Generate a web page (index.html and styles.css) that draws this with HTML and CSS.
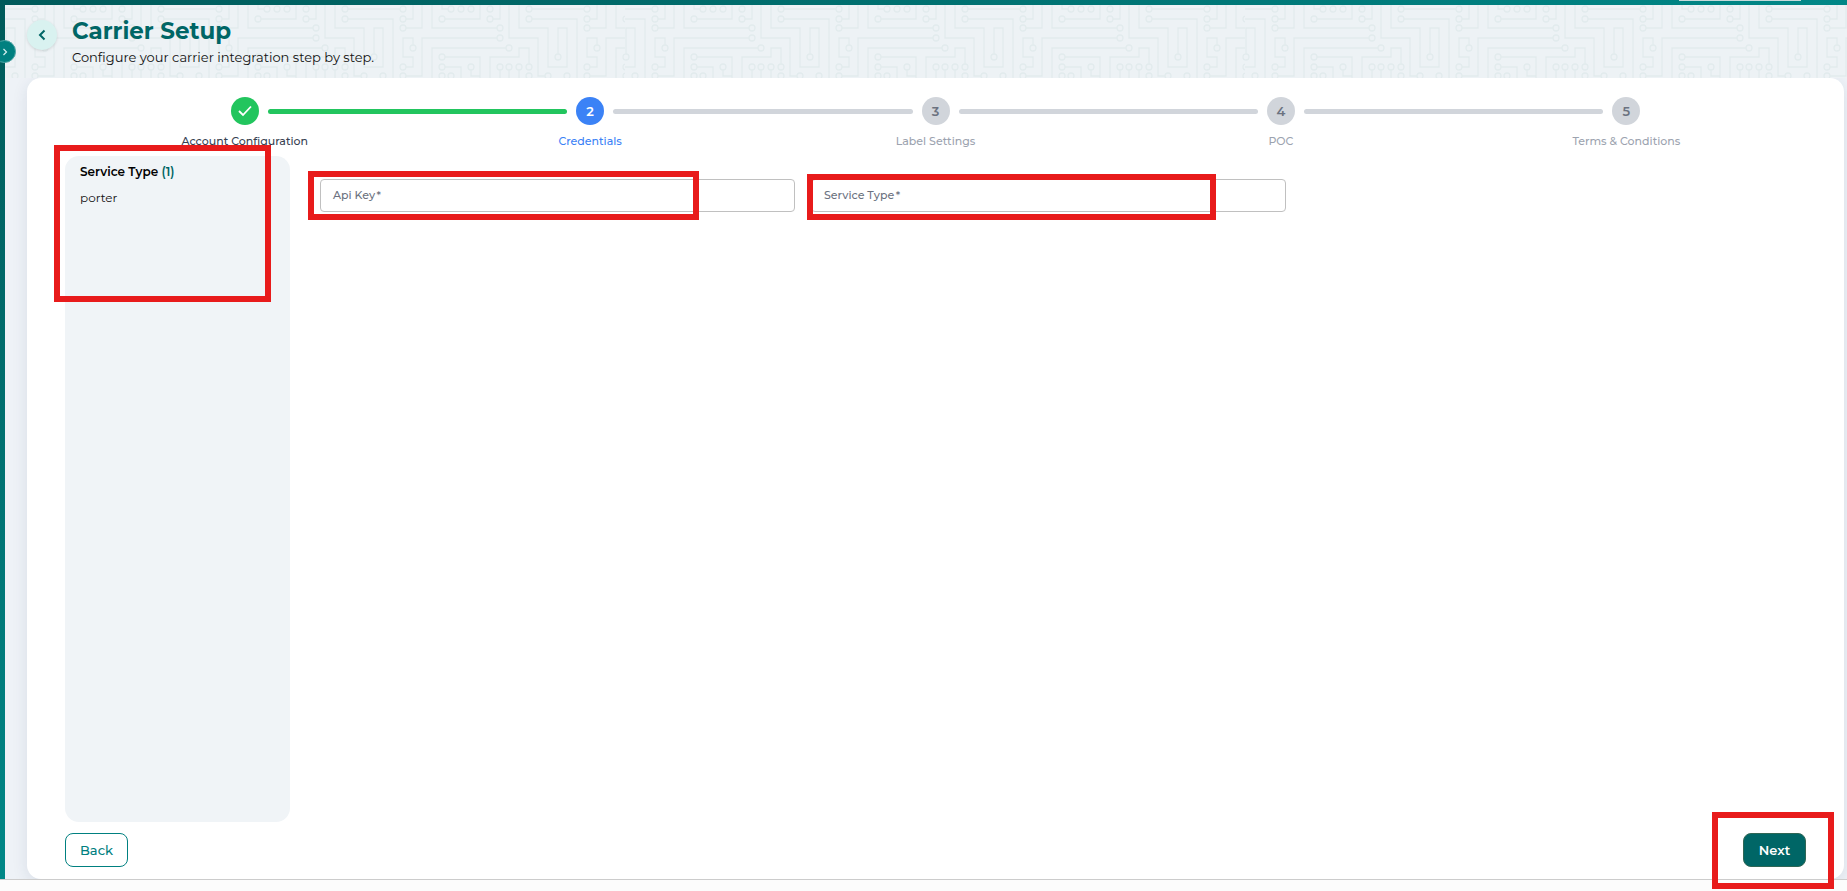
FILE: index.html
```html
<!DOCTYPE html>
<html lang="en">
<head>
	<meta charset="utf-8">
	<title>Carrier Setup</title>
	<meta name="viewport" content="width=device-width, initial-scale=1">
	<link rel="stylesheet" href="styles.css">
</head>
<body>
	<div class="shell">
		<div class="top-tab"></div>
		<button class="menu-toggle" aria-label="Open menu">
			<svg width="8" height="8" viewBox="0 0 8 8"><path d="M2.5 1 L5.5 4 L2.5 7"/></svg>
		</button>

		<div class="page">
			<header class="header">
				<!-- circuit board background -->
				<svg class="circuit" width="100%" height="100%" aria-hidden="true">
					<defs>
						<g id="traces">
							<path d="M129 4H181 M3 14H10V0 M3 23H19V0 M10 40V33H0V52H10V62H3 M3 71H19V33H94 M29 0V23H94 M29 80V43H103
								M42 14H77V0 M39 0V4H45 M90 14H97V0 M42 52H77V80 M42 62H58V80 M68 65V71H77
								M87 80V52H116V43H126V59 M97 65V80 M106 65V80 M116 65V80 M106 0V33H135V71H142
								M116 0V23H145V62H164V23H155V49 M129 14H174V80"/>
							<g>
								<circle cx="0" cy="4" r="3"/><circle cx="0" cy="14" r="3"/><circle cx="0" cy="23" r="3"/>
								<circle cx="10" cy="43" r="3"/><circle cx="0" cy="62" r="3"/><circle cx="0" cy="71" r="3"/>
								<circle cx="97" cy="23" r="3"/><circle cx="97" cy="33" r="3"/><circle cx="106" cy="43" r="3"/>
								<circle cx="39" cy="14" r="3"/><circle cx="48" cy="4" r="3"/><circle cx="58" cy="4" r="3"/>
								<circle cx="68" cy="4" r="3"/><circle cx="87" cy="4" r="3"/><circle cx="87" cy="14" r="3"/>
								<circle cx="39" cy="52" r="3"/><circle cx="39" cy="62" r="3"/><circle cx="68" cy="62" r="3"/>
								<circle cx="39" cy="71" r="3"/><circle cx="48" cy="71" r="3"/>
								<circle cx="97" cy="62" r="3"/><circle cx="106" cy="62" r="3"/><circle cx="116" cy="62" r="3"/>
								<circle cx="126" cy="62" r="3"/><circle cx="126" cy="71" r="3"/><circle cx="145" cy="71" r="3"/>
								<circle cx="155" cy="52" r="3"/><circle cx="164" cy="71" r="3"/>
								<circle cx="126" cy="4" r="3"/><circle cx="126" cy="14" r="3"/>
							</g>
						</g>
						<pattern id="board" width="620" height="80" patternUnits="userSpaceOnUse">
							<use href="#traces" x="-154"/>
							<use href="#traces" x="30"/>
							<use href="#traces" x="214"/>
							<use href="#traces" x="398"/>
							<use href="#traces" x="582"/>
						</pattern>
					</defs>
					<rect width="100%" height="100%" fill="url(#board)"/>
				</svg>
				<button class="back-arrow" aria-label="Go back">
					<svg width="12" height="12" viewBox="0 0 12 12"><path d="M8.5 1.5 L4 6 L8.5 10.5"/></svg>
				</button>
				<div class="titles">
					<h1>Carrier Setup</h1>
					<p>Configure your carrier integration step by step.</p>
				</div>
			</header>

			<main class="card">
				<ol class="stepper">
					<li class="step done">
						<div class="track">
							<span class="line"></span>
							<span class="dot">
								<svg width="14" height="12" viewBox="0 0 14 12"><path d="M1 6 L5 10 L13 1.5"/></svg>
							</span>
							<span class="line green"></span>
						</div>
						<span class="step-name">Account Configuration</span>
					</li>
					<li class="step active">
						<div class="track">
							<span class="line green"></span>
							<span class="dot">2</span>
							<span class="line"></span>
						</div>
						<span class="step-name">Credentials</span>
					</li>
					<li class="step">
						<div class="track">
							<span class="line"></span>
							<span class="dot">3</span>
							<span class="line"></span>
						</div>
						<span class="step-name">Label Settings</span>
					</li>
					<li class="step">
						<div class="track">
							<span class="line"></span>
							<span class="dot">4</span>
							<span class="line"></span>
						</div>
						<span class="step-name">POC</span>
					</li>
					<li class="step">
						<div class="track">
							<span class="line"></span>
							<span class="dot">5</span>
							<span class="line"></span>
						</div>
						<span class="step-name">Terms &amp; Conditions</span>
					</li>
				</ol>

				<div class="content">
					<aside class="services">
						<h2>Service Type <span>(1)</span></h2>
						<p>porter</p>
					</aside>
					<form class="fields">
						<div class="field">
							<label for="api-key">Api Key&thinsp;*</label>
							<input type="text" id="api-key" required>
						</div>
						<div class="field">
							<label for="service-type">Service Type&thinsp;*</label>
							<input type="text" id="service-type" required>
						</div>
					</form>
				</div>

				<div class="buttons">
					<button class="btn">Back</button>
					<button class="btn primary">Next</button>
				</div>
			</main>
		</div>
	</div>
	<div class="bottom-strip"></div>

	<!-- highlights -->
	<div class="mark mark-services"></div>
	<div class="mark mark-key"></div>
	<div class="mark mark-type"></div>
	<div class="mark mark-next"></div>
</body>
</html>
```

FILE: styles.css
```css
* {
	box-sizing: border-box;
}

body {
	position: relative;
	display: flex;
	flex-direction: column;
	min-height: 100vh;
	margin: 0;
	background: #fff;
	color: #111;
	font-family: Montserrat, Inter, "Open Sans", sans-serif;
	font-size: 13px;
	overflow: hidden;
}

h1, h2, p, ol {
	margin: 0;
	padding: 0;
}

button, input {
	font-family: inherit;
}

svg path {
	fill: none;
}

.shell {
	position: relative;
	display: flex;
	flex: 1;
	padding: 5px 0 0 5px;
	background: linear-gradient(to bottom right, #005a5a 0%, #008787 50%);
}

.top-tab {
	position: absolute;
	top: 0;
	right: 46px;
	width: 122px;
	height: 1px;
	background: #c5dada;
}

.menu-toggle {
	position: absolute;
	z-index: 2;
	top: 40px;
	left: -7px;
	display: flex;
	align-items: center;
	justify-content: center;
	width: 23px;
	height: 23px;
	padding: 0 0 0 1px;
	border: 1px solid #4fa5a5;
	border-radius: 50%;
	background: #008080;
}

.menu-toggle path {
	stroke: #d5eeee;
	stroke-width: 1.2;
}

.page {
	display: flex;
	flex: 1;
	flex-direction: column;
	background: #eef2f7;
}

.header {
	position: relative;
	z-index: 1;
	display: flex;
	gap: 15px;
	height: 73px;
	padding: 12px 22px 0;
	background: #edf2f5;
}

.circuit {
	position: absolute;
	top: 0;
	left: 0;
}

.circuit path, .circuit circle {
	fill: none;
	stroke: #e2ebed;
	stroke-width: 1.3;
}

.back-arrow {
	position: relative;
	display: flex;
	align-items: center;
	justify-content: center;
	width: 30px;
	height: 30px;
	margin-top: 3px;
	padding: 0;
	border: 0;
	border-radius: 50%;
	background: #d9f2f0;
	box-shadow: 0 1px 3px rgba(0, 0, 0, 0.12);
}

.back-arrow path {
	stroke: #066;
	stroke-width: 2;
}

.titles {
	position: relative;
}

h1 {
	color: #066;
	font-size: 23px;
	font-weight: 700;
	line-height: 28px;
}

.titles p {
	font-size: 13px;
	line-height: 20px;
	margin-top: 2px;
}

.card {
	display: flex;
	flex: 1;
	flex-direction: column;
	margin: 0 3px 0 22px;
	padding: 19px 38px 12px;
	border-radius: 14px;
	background: #fff;
	box-shadow: 0 4px 16px rgba(30, 50, 90, 0.1);
}

.stepper {
	display: flex;
	padding: 0 7px;
	list-style: none;
}

.step {
	flex: 1;
	color: #9ca3af;
	text-align: center;
}

.track {
	display: flex;
	align-items: center;
	gap: 9px;
}

.line {
	flex: 1;
	height: 5px;
	background: #d1d5db;
}

.line:first-child {
	border-radius: 0 3px 3px 0;
}

.line:last-child {
	border-radius: 3px 0 0 3px;
}

.line.green {
	background: #22c55e;
}

.step:first-child .line:first-child,
.step:last-child .line:last-child {
	visibility: hidden;
}

.dot {
	display: flex;
	align-items: center;
	justify-content: center;
	width: 28px;
	height: 28px;
	border-radius: 50%;
	background: #d1d5db;
	color: #6b7280;
	font-size: 13px;
	font-weight: 600;
}

.done .dot {
	background: #22c55e;
}

.done path {
	stroke: #fff;
	stroke-width: 1.8;
}

.active .dot {
	background: #3b82f6;
	color: #fff;
}

.step-name {
	display: block;
	margin-top: 8px;
	font-size: 11px;
	font-weight: 500;
	line-height: 16px;
}

.done .step-name {
	color: #374151;
}

.active .step-name {
	color: #3b82f6;
}

.content {
	display: flex;
	flex: 1;
	margin-top: 7px;
}

.services {
	width: 225px;
	padding: 6px 15px;
	border-radius: 14px;
	background: #f0f4f7;
}

.services h2 {
	color: #000;
	font-size: 12px;
	font-weight: 600;
	line-height: 20px;
}

.services span {
	color: #066;
}

.services p {
	margin-top: 6px;
	font-size: 12px;
	line-height: 20px;
}

.fields {
	display: grid;
	flex: 1;
	grid-template-columns: repeat(3, 1fr);
	align-content: start;
	gap: 16px;
	padding: 23px 29px 23px 30px;
}

.field {
	position: relative;
}

.field label {
	position: absolute;
	top: 8px;
	left: 13px;
	color: #6b7280;
	font-size: 11px;
	font-weight: 500;
	line-height: 16px;
}

.field input {
	display: block;
	width: 100%;
	height: 33px;
	padding: 0 13px;
	border: 1px solid #c0c0c0;
	border-radius: 4px;
	background: transparent;
}

.buttons {
	display: flex;
	justify-content: space-between;
	margin-top: 11px;
}

.btn {
	width: 63px;
	height: 34px;
	padding: 0;
	border: 1px solid #008080;
	border-radius: 8px;
	background: #fff;
	color: #008080;
	font-size: 13px;
	font-weight: 500;
}

.btn.primary {
	border-color: #2f6655;
	background: #066;
	color: #fff;
	font-weight: 600;
}

.bottom-strip {
	position: relative;
	height: 12px;
	border-top: 1px solid #ccc;
	background: #fcfcfc;
}

.mark {
	position: absolute;
	z-index: 3;
	border: 6px solid #e81b1b;
	pointer-events: none;
}

.mark-services {
	top: 145px;
	left: 54px;
	width: 217px;
	height: 157px;
}

.mark-key {
	top: 171px;
	left: 308px;
	width: 391px;
	height: 49px;
}

.mark-type {
	top: 174px;
	left: 807px;
	width: 409px;
	height: 46px;
}

.mark-next {
	right: 13px;
	bottom: 2px;
	width: 122px;
	height: 77px;
}
```
